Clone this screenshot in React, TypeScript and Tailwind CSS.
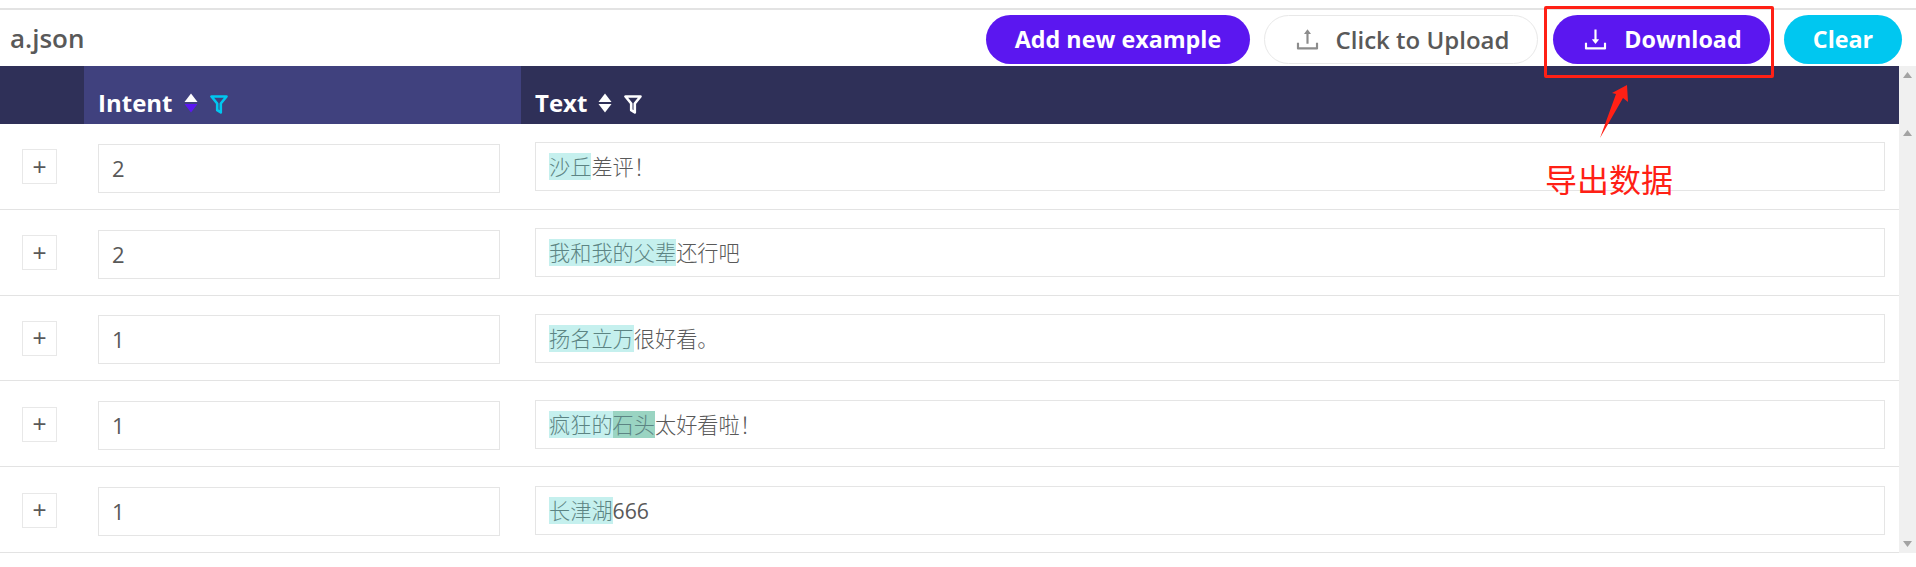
import React from "react";
import { AiOutlineUpload, AiOutlineDownload } from "react-icons/ai";

const font = "font-['Open_Sans','Noto_Sans_CJK_SC',sans-serif]";

type Seg = { t: string; bg?: string; digits?: boolean };
const rows: { intent: string; segs: Seg[] }[] = [
  { intent: "2", segs: [{ t: "沙丘", bg: "bg-[#c5f0ee]" }, { t: "差评！" }] },
  { intent: "2", segs: [{ t: "我和我的父辈", bg: "bg-[#c5f0ee]" }, { t: "还行吧" }] },
  { intent: "1", segs: [{ t: "扬名立万", bg: "bg-[#c5f0ee]" }, { t: "很好看。" }] },
  { intent: "1", segs: [{ t: "疯狂的", bg: "bg-[#c5f0ee]" }, { t: "石头", bg: "bg-[#9ad4c2]" }, { t: "太好看啦！" }] },
  { intent: "1", segs: [{ t: "长津湖", bg: "bg-[#c5f0ee]" }, { t: "666", digits: true }] },
];

function Sorter({ down, className }: { down: string; className: string }) {
  return (
    <svg width="14" height="20" viewBox="0 0 14 20" className={`shrink-0 ${className}`}>
      <path d="M7 0.5 L13.5 9 L0.5 9 Z" fill="#ffffff" />
      <path d="M7 19.5 L13.5 11 L0.5 11 Z" fill={down} />
    </svg>
  );
}

function Funnel({ color, className }: { color: string; className: string }) {
  return (
    <svg width="18" height="19" viewBox="0 0 18 19" className={`shrink-0 ${className}`} fill="none">
      <path d="M1.5 1.5 H16.5 L10.8 8.5 V17.5 L7.2 15.2 V8.5 Z" stroke={color} strokeWidth="2.6" strokeLinejoin="round" />
    </svg>
  );
}

function Arrow({ up }: { up?: boolean }) {
  return (
    <svg width="9" height="6" viewBox="0 0 9 6">
      <path d={up ? "M4.5 0 L9 6 L0 6 Z" : "M4.5 6 L9 0 L0 0 Z"} fill="#a3a3a3" />
    </svg>
  );
}

function Row({ intent, segs }: { intent: string; segs: Seg[] }) {
  return (
    <div className="flex h-[85.8px] items-center border-b border-[#e3e3e3] text-[#595959]">
      <div className="w-[84px] pl-[22px]">
        <div className="mt-[1px] flex h-[35px] w-[35px] items-center justify-center border border-[#e8e8e8] font-['Liberation_Sans',sans-serif] text-[24px] leading-none">+</div>
      </div>
      <div className="w-[437px] pl-[14px]">
        <div className="mt-[4px] flex h-[49px] w-[402px] items-center border border-[#e5e5e5] pl-[13px] text-[22px]">{intent}</div>
      </div>
      <div className="min-w-0 flex-1 px-[14px]">
        <div className="mt-[1px] flex h-[49px] items-center border border-[#e5e5e5] pl-[13px] text-[21.2px] font-light">
          {segs.map((s, i) => (
            <span
              key={i}
              className={`inline-block h-[27px] leading-[27px] ${s.bg ? `${s.bg} text-[#5c8483]` : ""} ${s.digits ? "font-normal" : ""}`}
            >
              {s.t}
            </span>
          ))}
        </div>
      </div>
    </div>
  );
}

export default function App() {
  return (
    <div className={`relative h-[567px] w-[1916px] overflow-hidden bg-white ${font}`}>
      <div className="h-[10px] border-b-2 border-[#e3e3e3]" />
      <div className="flex h-[56px] items-start pt-[5px]">
        <div className="flex-1 pl-[10px] pt-[4px] text-[26px] font-semibold leading-[38px] text-[#595959]">a.json</div>
        <button className="h-[49px] w-[264px] rounded-full bg-[#5b17f0] text-[23.3px] font-bold text-white">Add new example</button>
        <button className="ml-[14px] flex h-[49px] w-[274px] items-center justify-center rounded-full border border-[#e8e8e8] bg-white text-[24px] font-semibold text-[#595959]">
          <AiOutlineUpload className="mr-[14px] text-[29px] text-[#8c8c8c]" />
          Click to Upload
        </button>
        <button className="ml-[15px] flex h-[49px] w-[217px] items-center justify-center rounded-full bg-[#5b17f0] text-[23.3px] font-bold text-white">
          <AiOutlineDownload className="mr-[14px] text-[29px]" />
          Download
        </button>
        <button className="mx-[14px] h-[49px] w-[118px] rounded-full bg-[#00c7f0] text-[23.3px] font-bold text-white">Clear</button>
      </div>

      <div className="flex h-[58px]">
        <div className="flex w-[1899px] bg-[#2f3058] text-[24px] font-bold text-white">
          <div className="w-[84px]" />
          <div className="flex w-[437px] items-center bg-[#40417e] pl-[14px] pt-[15px]">
            Intent
            <Sorter down="#5b17f0" className="ml-[11px]" />
            <Funnel color="#00c7f0" className="ml-[12px] mt-[3px]" />
          </div>
          <div className="flex flex-1 items-center pl-[14px] pt-[15px]">
            Text
            <Sorter down="#ffffff" className="ml-[11px]" />
            <Funnel color="#ffffff" className="ml-[12px] mt-[3px]" />
          </div>
        </div>
        <div className="flex w-[17px] justify-center bg-[#f0f0f0] pt-[6px]">
          <Arrow up />
        </div>
      </div>

      <div className="flex">
        <div className="w-[1899px]">
          {rows.map((r, i) => (
            <Row key={i} intent={r.intent} segs={r.segs} />
          ))}
        </div>
        <div className="flex w-[17px] flex-col items-center justify-between bg-[#f0f0f0] py-[6px]">
          <Arrow up />
          <Arrow />
        </div>
      </div>

      <div className="pointer-events-none absolute left-[1544px] top-[6px] h-[72px] w-[230px] rounded-[2px] border-[3px] border-[#ff2015]" />
      <svg className="pointer-events-none absolute left-[1595px] top-[82px]" width="36" height="60" viewBox="0 0 36 60">
        <path d="M32 3 L33 20 L28 16 L5 56 L21 12 L17 11 Z" fill="#ff2015" />
      </svg>
      <div className="pointer-events-none absolute left-[1545px] top-[160px] text-[32px] leading-[40px] text-[#ff2015]">导出数据</div>
    </div>
  );
}
